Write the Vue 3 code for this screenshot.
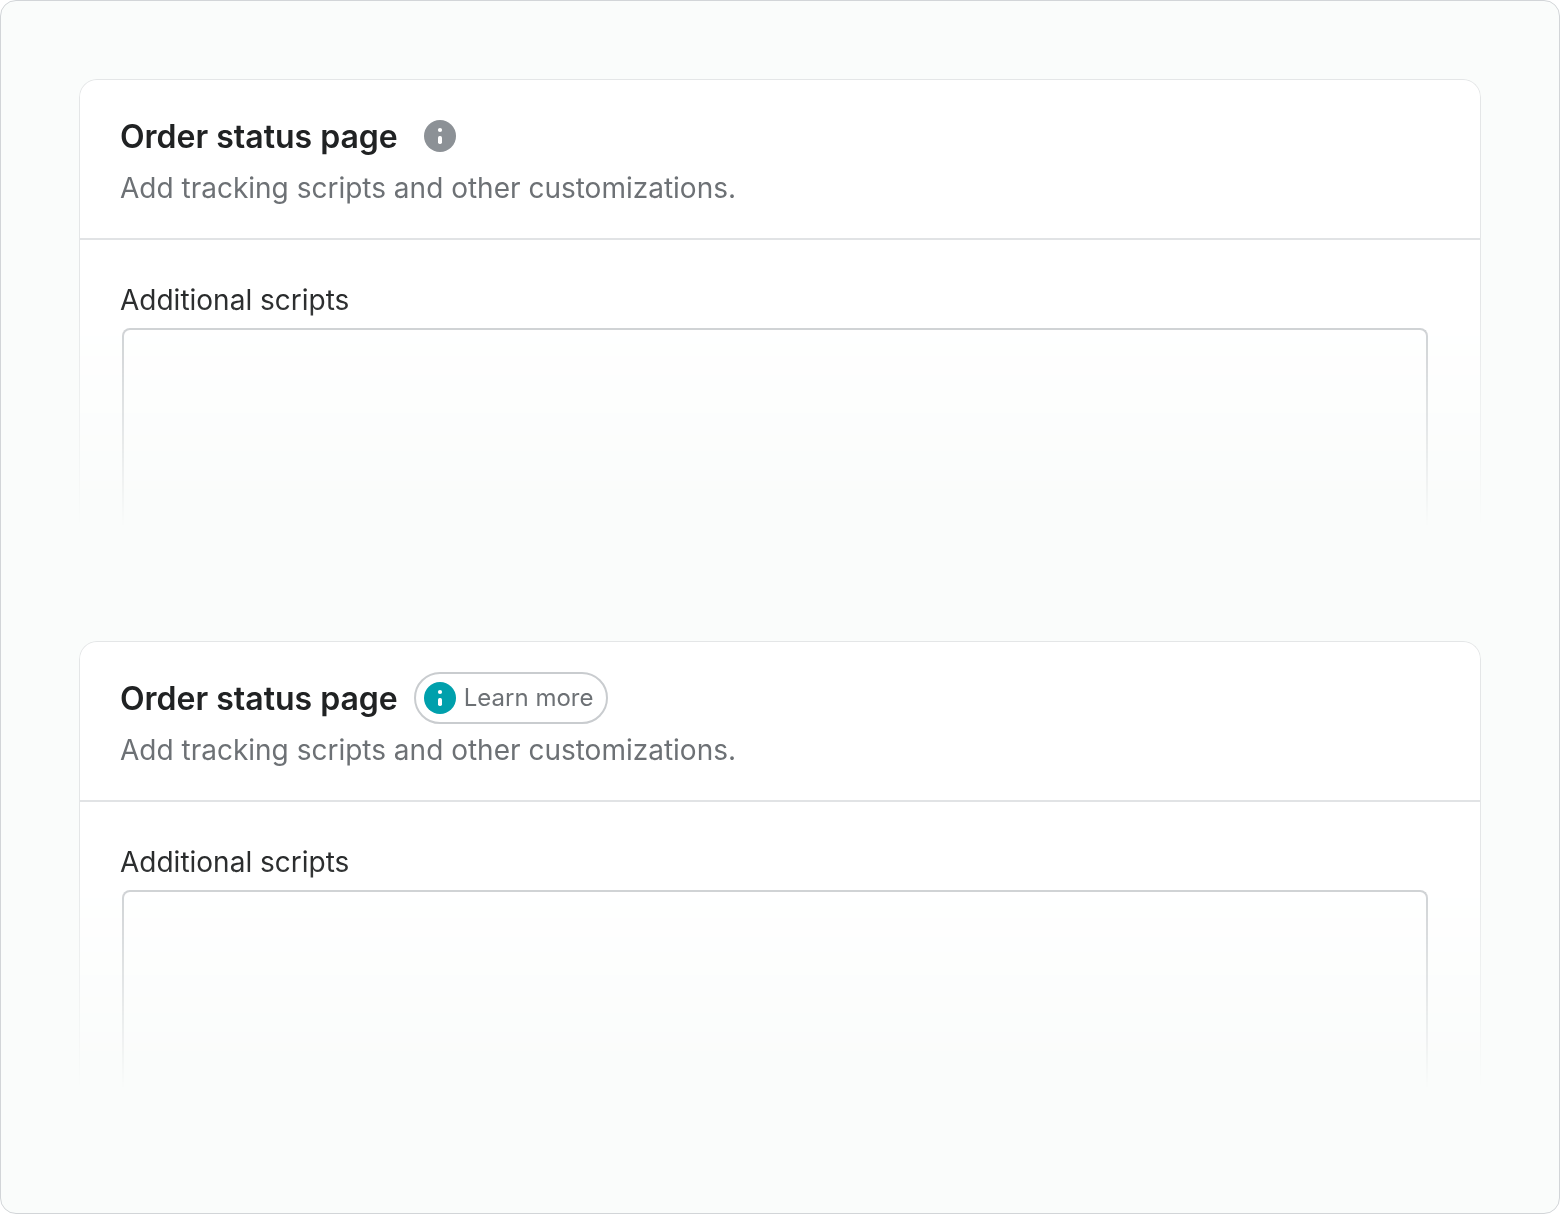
<script setup>
const cards = [
  { id: 'compact', expanded: false },
  { id: 'expanded', expanded: true },
]
</script>

<template>
  <main class="board">
    <section v-for="card in cards" :key="card.id" class="card">
      <header class="card-header">
        <div class="title-row">
          <h2 class="title">Order status page</h2>
          <button
            type="button"
            class="info"
            :class="{ expanded: card.expanded }"
            :aria-label="card.expanded ? null : 'Learn more'"
          >
            <svg class="info-icon" viewBox="0 0 32 32" aria-hidden="true">
              <circle cx="16" cy="16" r="16" fill="currentColor" />
              <circle cx="16" cy="10" r="2.1" fill="#fff" />
              <rect x="14" y="16" width="4" height="8" rx="1.7" fill="#fff" />
            </svg>
            <span v-if="card.expanded">Learn more</span>
          </button>
        </div>
        <p class="subtitle">Add tracking scripts and other customizations.</p>
      </header>
      <div class="card-body">
        <label class="label" :for="`scripts-${card.id}`">Additional scripts</label>
        <textarea :id="`scripts-${card.id}`" class="scripts"></textarea>
      </div>
    </section>
  </main>
</template>

<style>
body {
  background: #fff;
}
</style>

<style scoped>
.board {
  box-sizing: border-box;
  min-height: 100vh;
  padding: 78px;
  display: flex;
  flex-direction: column;
  gap: 113px;
  background: #fafcfb;
  border: 1px solid #d2d5d8;
  border-radius: 16px;
  font-family: Inter, "Liberation Sans", sans-serif;
}

.card {
  background: #fff;
  border: 1px solid #e4e6e7;
  border-bottom: 0;
  border-radius: 18px 18px 0 0;
  mask-image: linear-gradient(to bottom, #000 220px, transparent 448px);
}

.card-header {
  padding: 30px 40px 32px;
  border-bottom: 2px solid #e1e3e5;
}

.title-row {
  display: flex;
  align-items: center;
  gap: 16px;
}

.title {
  margin: 0;
  padding-top: 2px;
  font-size: 32px;
  line-height: 40px;
  font-weight: 600;
  color: #202223;
}

.info {
  box-sizing: border-box;
  height: 52px;
  display: flex;
  align-items: center;
  gap: 8px;
  padding: 0 13px 0 8px;
  background: transparent;
  border: 2px solid transparent;
  border-radius: 26px;
  font-family: inherit;
  font-size: 24px;
  line-height: 32px;
  color: #8c9196;
  cursor: pointer;
}

.info.expanded {
  border-color: #c9cccf;
}

.info span {
  color: #6d7175;
}

.info-icon {
  width: 32px;
  height: 32px;
}

.info.expanded .info-icon {
  color: #00a0ac;
}

.subtitle {
  margin: 8px 0 0;
  font-size: 28px;
  line-height: 36px;
  color: #6d7175;
}

.card-body {
  display: flex;
  flex-direction: column;
  gap: 10px;
  padding: 42px 52px 0 42px;
}

.label {
  margin-left: -2px;
  font-size: 28px;
  line-height: 36px;
  color: #292b2c;
}

.scripts {
  box-sizing: border-box;
  height: 200px;
  padding: 12px 16px;
  background: transparent;
  border: 2px solid #c9cccf;
  border-bottom: 0;
  border-radius: 8px 8px 0 0;
  outline: none;
  resize: none;
  font-family: inherit;
  font-size: 28px;
}
</style>
